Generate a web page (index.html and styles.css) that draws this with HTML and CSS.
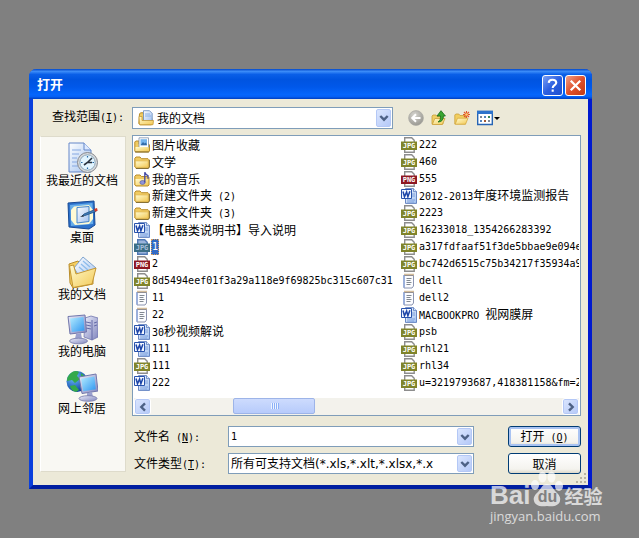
FILE: index.html
```html
<!DOCTYPE html>
<html lang="zh-CN">
<head>
  <meta charset="UTF-8">
  <meta name="viewport" content="width=device-width, initial-scale=1">
  <title>打开</title>
  <link rel="stylesheet" href="styles.css">
</head>
<body>

  <!-- Icon sprites -->
  <svg class="sprites" aria-hidden="true">
    <defs>
      <linearGradient id="gold" x1="0" y1="0" x2="1" y2="1">
        <stop offset="0" stop-color="#fffbd0"/><stop offset="1" stop-color="#f3c955"/>
      </linearGradient>
      <linearGradient id="paper" x1="0" y1="0" x2="1" y2="1">
        <stop offset="0" stop-color="#ffffff"/><stop offset="1" stop-color="#9fc0f0"/>
      </linearGradient>
      <linearGradient id="screen" x1="0" y1="0" x2="1" y2="1">
        <stop offset="0" stop-color="#b5ecff"/><stop offset="1" stop-color="#2f96f0"/>
      </linearGradient>
      <linearGradient id="metal" x1="0" y1="0" x2="1" y2="1">
        <stop offset="0" stop-color="#eceefb"/><stop offset="1" stop-color="#8085bd"/>
      </linearGradient>
      <radialGradient id="globe" cx="35%" cy="30%" r="75%">
        <stop offset="0" stop-color="#6fc4ff"/><stop offset="1" stop-color="#073a9c"/>
      </radialGradient>
      <radialGradient id="grey" cx="40%" cy="30%" r="75%">
        <stop offset="0" stop-color="#d6d5cf"/><stop offset="1" stop-color="#96958f"/>
      </radialGradient>
    </defs>

    <symbol id="folder" viewBox="0 0 16 16">
      <path d="M.8 13V4.2L2 3h4l1.5 1.7H14l1 1V13l-1 1.2H2z" fill="#f0cb62" stroke="#b98d2b"/>
      <path d="M1.5 7h12.7v6.3H1.8z" fill="url(#gold)" stroke="#dcb351" stroke-width=".6"/>
      <path d="M2 14.5h12.5l1-1.5V6" fill="none" stroke="#75622c" stroke-width=".8"/>
    </symbol>

    <symbol id="pictures" viewBox="0 0 16 16">
      <path d="M.8 14V5l1-1H5v3h9.5l1 1v6l-1 1h-13z" fill="#f0cb62" stroke="#b98d2b"/>
      <path d="M5 .8h9.5v10H5z" fill="#fff" stroke="#8292ab" stroke-width=".8"/>
      <path d="M6.5 2.2H13v6H6.5z" fill="#75b4ed"/>
      <path d="M6.5 8.2 9 5l1.5 1.5L12 5.5l1 2.7z" fill="#356ca8"/>
      <path d="M1.5 10h13v4h-13z" fill="url(#gold)"/>
      <path d="M1 15h14" stroke="#75622c" stroke-width=".8"/>
    </symbol>

    <symbol id="music" viewBox="0 0 16 16">
      <path d="M.8 14V5.2L2 4h4l1.5 1.5H14l1 1V14l-1 1H2z" fill="#f0cb62" stroke="#b98d2b"/>
      <path d="M1.5 8h12.7v6H1.8z" fill="url(#gold)"/>
      <ellipse cx="8.5" cy="11.5" rx="2.6" ry="2" fill="#8f94d8" stroke="#5055a0" stroke-width=".6"/>
      <path d="M10.8 11.5V1.2q1 2.6 3.2 3.5v3" fill="none" stroke="#4248a3" stroke-width="1.3"/>
    </symbol>

    <symbol id="word" viewBox="0 0 16 16">
      <path d="M4.5.6h8l3 3v11.8h-11z" fill="url(#paper)" stroke="#5b7cbc" stroke-width=".9"/>
      <path d="M12.5.6v3h3" fill="#dce8fb" stroke="#5b7cbc" stroke-width=".8"/>
      <path d="M11 6h3M11 8h3M6 12h8M6 14h7" stroke="#6c93d5" stroke-width=".8"/>
      <path d="M.5 1.5h10v9H.5z" fill="#f4f8ff" stroke="#2853ac"/>
      <path d="m2 3.5 1.5 5.2L5.6 4l1.3 4.7 2-5.4" fill="none" stroke="#1c45a8" stroke-width="1.5"/>
    </symbol>

    <symbol id="jpg" viewBox="0 0 16 16">
      <path class="tag-page" d="M3.7 5V.8h7l2.5 2.5V5M3.7 12v3.2h9.5V12" stroke-width="1.4"/>
      <path class="tag-label" d="M0 4.5h16V13H0z"/>
      <text x="8" y="11.3" class="tag">JPG</text>
    </symbol>

    <symbol id="png" viewBox="0 0 16 16">
      <path class="tag-page" d="M3.7 5V.8h7l2.5 2.5V5M3.7 12v3.2h9.5V12" stroke-width="1.4"/>
      <path d="M0 4.5h16V13H0z" fill="#8e1722"/>
      <text x="8" y="11.3" class="tag">PNG</text>
    </symbol>

    <symbol id="txt" viewBox="0 0 16 16">
      <path d="M3 2.5h9.5V13L11 15H3z" fill="#fbfcff" stroke="#7e88a8" stroke-width=".9"/>
      <path d="M3 2v12.5" stroke="#8aa6dd" stroke-width="1.4"/>
      <path d="M3.5 1.7h9" stroke="#a77b39" stroke-width="1.8" stroke-dasharray="1 1"/>
      <path d="M5.5 5.5h5M5.5 7.5h4M5.5 9.5h5M5.5 11.5h4" stroke="#737b84" stroke-width=".9"/>
    </symbol>

    <symbol id="mydocs" viewBox="0 0 16 16">
      <path d="M.8 13.5 1.5 4l1-1.2H5l1 1.5h7l1.5 9-1 1.5H2z" fill="#f0cb62" stroke="#b98d2b"/>
      <path d="M5.5.7h6l2.7 2.7v7.8H5.5z" fill="url(#paper)" stroke="#6589bd" stroke-width=".8"/>
      <path d="M7 4h5M7 6h6" stroke="#78a5df" stroke-width=".8"/>
      <path d="M1 6.5h3v4h11.5l-.5 4.2H1.5z" fill="url(#gold)" stroke="#c79b37" stroke-width=".8"/>
    </symbol>

    <symbol id="recent" viewBox="0 0 32 32">
      <path d="M3 1h15l7 7v22H3z" fill="url(#paper)" stroke="#6587c8"/>
      <path d="M18 1v7h7" fill="#dce9ff" stroke="#6587c8"/>
      <path d="M6 8h9M6 12h7M6 16h5M6 20h5M6 24h6" stroke="#86a8e2"/>
      <circle cx="21.5" cy="20.5" r="10" fill="#d8dadd" stroke="#85898f"/>
      <circle cx="21.5" cy="20.5" r="7.7" fill="#e2f5ff" stroke="#8da6b8"/>
      <path d="M21.5 14v1.5M21.5 25.5V27M15 20.5h1.5M26.5 20.5H28" stroke="#2569a7" stroke-width="1.2"/>
      <path d="m18 23 3.5-2.5L26 16M21.5 20.5H26" fill="none" stroke="#29323e" stroke-width="1.6"/>
    </symbol>

    <symbol id="desktop" viewBox="0 0 32 32">
      <path d="m2 4 26-2 1 24-6 4-20-2z" fill="#2d72cb" stroke="#174a95"/>
      <path d="M4 6 26.5 4 27 25 5 27z" fill="#67aeea"/>
      <path d="M8 7.5 23 6l4 5v9l-4 5-14 1-4-5V11z" fill="#fffbd5"/>
      <path d="m11 8.5 12-1v15l-12 1.5z" fill="url(#paper)" stroke="#4585ca"/>
      <path d="m16 17 2-2 11-4.500 1 2-11 4z" fill="#3e7dbd" stroke="#214f81" stroke-width=".8"/>
      <path d="m28 10 3-1 .7 2.700-2.700 1z" fill="#d43b2c"/>
      <path d="m14 18 3-2 1 1.500z" fill="#28323b"/>
    </symbol>

    <symbol id="documents" viewBox="0 0 32 32">
      <path d="m3 8 9-3 3 3 12 2v18l-20 4-3-5z" fill="#f5cf62" stroke="#b98d2b"/>
      <path d="M17 1 30 12 17 26 8 12z" fill="url(#paper)" stroke="#7fa5cf"/>
      <path d="m15 8 7 6M13 11l7 6M17 5l7 6" stroke="#8dbceb" stroke-width="1.3"/>
      <path d="m3.500 10 4-1L10 18l20-6-4 16-19 3.500z" fill="url(#gold)" stroke="#c59734"/>
    </symbol>

    <symbol id="computer" viewBox="0 0 32 32">
      <path d="m19 5 6-2 7 2v19l-6 3-8-3z" fill="url(#metal)" stroke="#7176af" stroke-width=".8"/>
      <path d="M26 7v20M20 9l5 1M20 12l5 1M20 15l5 1M28 10l3-1M28 13l3-1" stroke="#656ba8"/>
      <path d="M2 3.5 19 2l1.5 17L4 21z" fill="url(#metal)" stroke="#7277ac"/>
      <path d="M4 5.5 17.5 4l1 13.5L5.8 19z" fill="url(#screen)"/>
      <path d="m10 21 5-1 1 6H9z" fill="#9aa0ce"/>
      <ellipse cx="12.5" cy="28" rx="9" ry="2.8" fill="url(#metal)" stroke="#7479aa" stroke-width=".8"/>
    </symbol>

    <symbol id="network" viewBox="0 0 32 32">
      <circle cx="11" cy="11.5" r="10.5" fill="url(#globe)"/>
      <path d="M3 5q5-6 10-3l-2 4 3 3-5 4-3-3-5 1q0-4 2-6zM4 16l5-1 4 5-3 2q-5-1-6-6zM15 3l5 4-2 3-3-2z" fill="#34a94b"/>
      <path d="m13 7 17-3 2 17-16 2.5z" fill="url(#metal)" stroke="#7277ac"/>
      <path d="m15.2 8.8 13.2-2.3 1.4 12.7-12.6 2z" fill="url(#screen)"/>
      <path d="m21 23 5-1 1 5h-6z" fill="#9aa0ce"/>
      <ellipse cx="22" cy="28.5" rx="9" ry="2.8" fill="url(#metal)" stroke="#7479aa" stroke-width=".8"/>
    </symbol>

    <symbol id="back" viewBox="0 0 16 16">
      <circle cx="8" cy="8" r="7.4" fill="url(#grey)" stroke="#aaa9a3" stroke-width=".7"/>
      <path d="M12.5 8H4.5M8 4.2 4.2 8 8 11.8" fill="none" stroke="#fff" stroke-width="2"/>
    </symbol>

    <symbol id="up" viewBox="0 0 16 16">
      <path d="M1 14V6l1-1h3l1 1.5h6V14z" fill="#efcf66" stroke="#caa03a" stroke-width=".8"/>
      <path d="m1.3 14.5 2.5-6H14l-2.7 6z" fill="url(#gold)" stroke="#caa03a" stroke-width=".8"/>
      <path d="M7 12q3-1 2.6-6H6L10 .7 14.400 6h-2q0 6-5.400 6z" fill="#3aa631" stroke="#176b18" stroke-width=".8"/>
    </symbol>

    <symbol id="newfolder" viewBox="0 0 16 16">
      <path d="M.8 14V5l1-1h3L6 5.5h5.5V14z" fill="#f2cf60" stroke="#caa03a" stroke-width=".8"/>
      <path d="m1.2 14.2 2.3-6H14l-2.5 6z" fill="url(#gold)" stroke="#d5ab42" stroke-width=".8"/>
      <path d="M12.5 1v7M9 4.5h7M10 2l5 5M15 2l-5 5" stroke="#e0572a" stroke-width="1.1"/>
      <circle cx="12.5" cy="4.5" r="1.3" fill="#ffce70"/>
    </symbol>

    <symbol id="views" viewBox="0 0 16 16">
      <path d="M.7 1.5h14.6v13H.7z" fill="#fff" stroke="#2765b4" stroke-width="1.4"/>
      <path d="M0 .8h16V4H0z" fill="#2d73cc"/>
      <path d="M3 6h2v2H3zM11 10h2v2h-2z" fill="#7d8797"/>
      <path d="M7 6h2v2H7zM3 10h2v2H3z" fill="#5284be"/>
      <path d="M11 6h2v2h-2z" fill="#3b8b55"/>
      <path d="M7 10h2v2H7z" fill="#a15a35"/>
    </symbol>

    <symbol id="chevron" viewBox="0 0 10 10">
      <path d="m1.3 3 3.7 3.7L8.7 3" fill="none" stroke="#4d6185" stroke-width="2.4"/>
    </symbol>
  </svg>

  <form class="dialog">
    <header class="titlebar">
      <h1>打开</h1>
      <button type="button" class="caption help" aria-label="帮助">
        <svg viewBox="0 0 20 20"><path d="M6 7.2Q6.2 4 10 4t4 3.2c0 2.4-3.8 2.6-3.8 5.3M10.2 14.2v2.3" fill="none" stroke="#fff" stroke-width="2.2"/></svg>
      </button>
      <button type="button" class="caption close" aria-label="关闭">
        <svg viewBox="0 0 20 20"><path d="m5 5 10 10M15 5 5 15" stroke="#fff" stroke-width="2.4"/></svg>
      </button>
    </header>

    <div class="client">
      <div class="look-in">
        <label for="lookIn">查找范围<span class="en">(<u>I</u>):</span></label>
        <div class="combo with-icon">
          <svg class="icon combo-icon"><use href="#mydocs"/></svg>
          <select id="lookIn"><option>我的文档</option></select>
          <span class="arrow"><svg><use href="#chevron"/></svg></span>
        </div>
        <div class="tools">
          <button type="button" aria-label="后退" disabled><svg class="icon"><use href="#back"/></svg></button>
          <button type="button" aria-label="向上一级"><svg class="icon"><use href="#up"/></svg></button>
          <button type="button" aria-label="新建文件夹"><svg class="icon"><use href="#newfolder"/></svg></button>
          <button type="button" aria-label="查看"><svg class="icon"><use href="#views"/></svg><span class="caret"></span></button>
        </div>
      </div>

      <div class="main">
        <nav class="places">
          <a href="#"><svg><use href="#recent"/></svg>我最近的文档</a>
          <a href="#"><svg><use href="#desktop"/></svg>桌面</a>
          <a href="#"><svg><use href="#documents"/></svg>我的文档</a>
          <a href="#"><svg><use href="#computer"/></svg>我的电脑</a>
          <a href="#"><svg><use href="#network"/></svg>网上邻居</a>
        </nav>

        <div class="content">
          <div class="browser">
            <ul class="files">
              <li><svg class="icon"><use href="#pictures"/></svg><span>图片收藏</span></li>
              <li><svg class="icon"><use href="#folder"/></svg><span>文学</span></li>
              <li><svg class="icon"><use href="#music"/></svg><span>我的音乐</span></li>
              <li><svg class="icon"><use href="#folder"/></svg><span>新建文件夹<span class="en"> (2)</span></span></li>
              <li><svg class="icon"><use href="#folder"/></svg><span>新建文件夹<span class="en"> (3)</span></span></li>
              <li><svg class="icon"><use href="#word"/></svg><span>【电器类说明书】导入说明</span></li>
              <li class="selected"><svg class="icon"><use href="#jpg"/></svg><span class="en">1</span></li>
              <li><svg class="icon"><use href="#png"/></svg><span class="en">2</span></li>
              <li><svg class="icon"><use href="#jpg"/></svg><span class="en">8d5494eef01f3a29a118e9f69825bc315c607c31</span></li>
              <li><svg class="icon"><use href="#txt"/></svg><span class="en">11</span></li>
              <li><svg class="icon"><use href="#txt"/></svg><span class="en">22</span></li>
              <li><svg class="icon"><use href="#word"/></svg><span><span class="en">30</span>秒视频解说</span></li>
              <li><svg class="icon"><use href="#word"/></svg><span class="en">111</span></li>
              <li><svg class="icon"><use href="#jpg"/></svg><span class="en">111</span></li>
              <li><svg class="icon"><use href="#word"/></svg><span class="en">222</span></li>
              <li><svg class="icon"><use href="#jpg"/></svg><span class="en">222</span></li>
              <li><svg class="icon"><use href="#jpg"/></svg><span class="en">460</span></li>
              <li><svg class="icon"><use href="#png"/></svg><span class="en">555</span></li>
              <li><svg class="icon"><use href="#word"/></svg><span><span class="en">2012-2013</span>年度环境监测报告</span></li>
              <li><svg class="icon"><use href="#jpg"/></svg><span class="en">2223</span></li>
              <li><svg class="icon"><use href="#jpg"/></svg><span class="en">16233018_1354266283392</span></li>
              <li><svg class="icon"><use href="#jpg"/></svg><span class="en">a317fdfaaf51f3de5bbae9e094e</span></li>
              <li><svg class="icon"><use href="#jpg"/></svg><span class="en">bc742d6515c75b34217f35934a9</span></li>
              <li><svg class="icon"><use href="#txt"/></svg><span class="en">dell</span></li>
              <li><svg class="icon"><use href="#txt"/></svg><span class="en">dell2</span></li>
              <li><svg class="icon"><use href="#word"/></svg><span><span class="en">MACBOOKPRO </span>视网膜屏</span></li>
              <li><svg class="icon"><use href="#jpg"/></svg><span class="en">psb</span></li>
              <li><svg class="icon"><use href="#jpg"/></svg><span class="en">rhl21</span></li>
              <li><svg class="icon"><use href="#jpg"/></svg><span class="en">rhl34</span></li>
              <li><svg class="icon"><use href="#jpg"/></svg><span class="en">u=3219793687,418381158&amp;fm=2</span></li>
            </ul>
            <div class="scrollbar">
              <button type="button" class="left" aria-label="向左滚动"><svg><use href="#chevron"/></svg></button>
              <div class="track"><div class="thumb"><i></i><i></i><i></i><i></i></div></div>
              <button type="button" class="right" aria-label="向右滚动"><svg><use href="#chevron"/></svg></button>
            </div>
          </div>

          <div class="fields">
            <label for="fileName">文件名<span class="en"> (<u>N</u>):</span></label>
            <div class="combo">
              <input type="text" id="fileName" value="1">
              <span class="arrow"><svg><use href="#chevron"/></svg></span>
            </div>
            <button type="submit" class="push default">打开<span class="en"> (<u>O</u>)</span></button>

            <label for="fileType">文件类型<span class="en">(<u>T</u>):</span></label>
            <div class="combo">
              <select id="fileType"><option>所有可支持文档(*.xls,*.xlt,*.xlsx,*.x</option></select>
              <span class="arrow"><svg><use href="#chevron"/></svg></span>
            </div>
            <button type="button" class="push">取消</button>
          </div>
        </div>
      </div>
    </div>

    <svg class="grip" viewBox="0 0 12 12"><path d="M9 1h2v2H9zM5 5h2v2H5zM9 5h2v2H9zM1 9h2v2H1zM5 9h2v2H5zM9 9h2v2H9z" fill="#b8b4a2"/></svg>
  </form>

  <!-- Site watermark -->
  <div class="watermark">
    <div class="brand">
      <span class="bai">Bai</span>
      <span class="paw">
        <svg viewBox="0 0 34 36">
          <ellipse cx="5" cy="14" rx="4" ry="5"/>
          <ellipse cx="12.5" cy="6" rx="4" ry="5.5"/>
          <ellipse cx="21.5" cy="6" rx="4" ry="5.5"/>
          <ellipse cx="29" cy="15" rx="4" ry="5"/>
          <path d="M17 13c5 0 6 5 9 8s5 5 4 9-5 6-13 5c-8 1-12-1-13-5s1-6 4-9 4-8 9-8z"/>
        </svg>
        <b>du</b>
      </span>
      <span class="jingyan">经验</span>
    </div>
    <div class="url">jingyan.baidu.com</div>
  </div>

</body>
</html>
```
FILE: styles.css
```css
* {
  box-sizing: border-box;
}

body {
  margin: 0;
  padding: 69px 47px 49px 29px;
  background: #808080;
  color: #000;
  font-family: "Noto Sans CJK SC", sans-serif;
  font-size: 12px;
  line-height: 16px;
  position: relative;
}

/* Half-width text next to 12px Chinese */
.en {
  font-family: "DejaVu Sans Mono", monospace;
  font-size: 10px;
  white-space: pre;
}

button, input, select {
  font-family: inherit;
  font-size: 12px;
  color: inherit;
  margin: 0;
  padding: 0;
}

.sprites {
  position: absolute;
  width: 0;
  height: 0;
}

.icon {
  width: 16px;
  height: 16px;
  flex: none;
}

.tag {
  font-family: "DejaVu Sans Mono", monospace;
  font-size: 7px;
  font-weight: bold;
  fill: var(--tag-text, #fff);
  text-anchor: middle;
}

.tag-page {
  fill: var(--tag-fill, #fff);
  stroke: var(--tag-edge, #8d8d8d);
}

.tag-label {
  fill: var(--tag-label, #80842a);
}

/* Window */
.dialog {
  position: relative;
  background: #ece9d8;
  border: 4px solid;
  border-top: 0;
  border-color: #0a3fdc #0019cf #001ea0 #0a3fdc;
  border-radius: 8px 8px 0 0;
}

.titlebar {
  display: flex;
  align-items: center;
  gap: 2px;
  height: 30px;
  margin: 0 -4px;
  padding: 3px 6px 0 8px;
  border-radius: 7px 7px 0 0;
  background: linear-gradient(#0046c8 0, #3c8cf8 8%, #0a5fe8 18%, #0054e0 35%, #0058ea 60%, #0566fc 85%, #0560f5 92%, #003fc0 100%);
}

.titlebar h1 {
  flex: 1;
  margin: 0;
  padding-bottom: 3px;
  font-size: 13px;
  line-height: 20px;
  font-weight: bold;
  color: #fff;
}

.caption {
  width: 21px;
  height: 21px;
  border: 1px solid #fff;
  border-radius: 3px;
  background: linear-gradient(135deg, #7aa0f5, #2c5fe0 50%, #1d4fd0);
}

.caption.close {
  background: linear-gradient(135deg, #f0a088, #e0512c 50%, #c33a12);
}

.caption svg {
  display: block;
  width: 19px;
  height: 19px;
}

.client {
  padding: 8px 7px 11px;
}

/* Combo boxes */
.combo {
  position: relative;
  height: 21px;
  border: 1px solid #7f9db9;
  background: #fff;
}

.combo input, .combo select {
  display: block;
  width: 100%;
  height: 100%;
  padding: 0 17px 0 2px;
  border: 0;
  background: transparent;
  outline: none;
  appearance: none;
}

.combo.with-icon select {
  padding-left: 24px;
  padding-bottom: 2px;
}

.combo-icon {
  position: absolute;
  left: 5px;
  top: 2px;
}

.arrow {
  position: absolute;
  top: 1px;
  right: 1px;
  bottom: 1px;
  width: 15px;
  display: flex;
  align-items: center;
  justify-content: center;
  border: 1px solid #b4c8f6;
  border-radius: 2px;
  background: linear-gradient(135deg, #dbe6fe, #b5c9f8);
  pointer-events: none;
}

.arrow svg, .scrollbar svg {
  display: block;
  width: 10px;
  height: 10px;
}

/* Look-in row */
.look-in {
  display: flex;
  align-items: center;
}

.look-in label {
  width: 92px;
  padding: 0 0 3px 12px;
}

.look-in .combo {
  flex: 1;
  height: 22px;
}

.tools {
  display: flex;
  gap: 7px;
  width: 188px;
  padding-left: 15px;
}

.tools button {
  display: flex;
  align-items: center;
  gap: 1px;
  border: 0;
  background: none;
}

.caret {
  border: 3px solid transparent;
  border-top-color: #000;
  border-bottom: 0;
}

/* Places bar and content */
.main {
  display: flex;
  gap: 6px;
  margin-top: 6px;
}

.places {
  flex: none;
  width: 86px;
  margin-top: 1px;
  margin-bottom: 2px;
  padding: 5px 2px 0 0;
  border: 1px solid #dedbcb;
  border-left-color: #fff;
  background: #f9f8f3;
}

.places a {
  display: flex;
  flex-direction: column;
  align-items: center;
  height: 57px;
  color: #000;
  text-decoration: none;
}

.places svg {
  width: 32px;
  height: 32px;
  flex: none;
  margin-bottom: -2px;
}

.content {
  flex: 1;
  min-width: 0;
}

.browser {
  border: 1px solid #7f9db9;
  background: #fff;
  padding: 0 1px;
}

.files {
  display: grid;
  grid-auto-flow: column;
  grid-template-rows: repeat(15, 17px);
  grid-template-columns: 60% 40%;
  margin: 0;
  padding: 0 0 7px;
  list-style: none;
  overflow: hidden;
}

.files li {
  display: flex;
  align-items: center;
  gap: 2px;
  min-width: 0;
  white-space: nowrap;
}

.selected {
  --tag-label: #3b6e86;
  --tag-fill: #9ab4dc;
  --tag-edge: #5078b4;
  --tag-text: #a9bfdf;
}

.selected > span {
  height: 16px;
  padding: 0 1px;
  margin-left: -1px;
  background: #316ac5;
  color: #fff;
  outline: 1px dotted #d8a060;
  outline-offset: -1px;
}

/* Horizontal scroll bar */
.scrollbar {
  display: flex;
  height: 17px;
  background: #f3f2ec;
}

.scrollbar button {
  display: flex;
  align-items: center;
  justify-content: center;
  width: 17px;
  border: 1px solid #fff;
  border-radius: 3px;
  background: linear-gradient(135deg, #dbe6fe, #b5c9f8);
  box-shadow: inset 0 0 0 1px #b4c8f6;
}

.left svg {
  transform: rotate(90deg);
}

.right svg {
  transform: rotate(-90deg);
}

.track {
  flex: 1;
}

.thumb {
  display: flex;
  align-items: center;
  justify-content: center;
  gap: 1px;
  width: 20%;
  height: 16px;
  margin-left: 20%;
  border: 1px solid #9db4e8;
  border-radius: 2px;
  background: linear-gradient(#cddbfd, #b7cbfb);
}

.thumb i {
  width: 1px;
  height: 6px;
  background: #eef4fe;
  box-shadow: 1px 0 #8cb0f8;
}

/* File name and type */
.fields {
  display: grid;
  grid-template-columns: 94px 1fr 73px;
  align-items: center;
  row-gap: 6px;
  margin-top: 10px;
  padding-left: 2px;
}

.fields .combo {
  margin-right: 34px;
}

#fileName {
  font-family: "DejaVu Sans Mono", monospace;
  font-size: 10px;
}

#fileType {
  font-family: "DejaVu Sans", "Noto Sans CJK SC", sans-serif;
}

.push {
  height: 21px;
  border: 1px solid #003c74;
  border-radius: 3px;
  background: linear-gradient(#fff, #f4f3ee 80%, #dcd8ca);
  line-height: 16px;
}

.push.default {
  box-shadow: inset 0 0 0 2px #a9c3f2;
}

.grip {
  position: absolute;
  right: 1px;
  bottom: 1px;
  width: 12px;
  height: 12px;
}

/* Watermark */
.watermark {
  position: absolute;
  right: 34px;
  bottom: 13px;
  width: 115px;
  color: #fff;
  fill: #fff;
  opacity: 0.7;
  pointer-events: none;
}

.brand {
  display: flex;
  align-items: flex-end;
  height: 36px;
}

.bai {
  font-family: "Liberation Sans", sans-serif;
  font-size: 26px;
  font-weight: bold;
  line-height: 24px;
}

.paw {
  position: relative;
  width: 34px;
  height: 36px;
}

.paw svg {
  display: block;
}

.paw b {
  position: absolute;
  left: 0;
  right: 0;
  bottom: 2px;
  color: #808080;
  font-family: "Liberation Sans", sans-serif;
  font-size: 16px;
  text-align: center;
}

.jingyan {
  font-size: 19px;
  font-weight: bold;
  line-height: 22px;
}

.url {
  font-family: "Open Sans", sans-serif;
  font-size: 13px;
  line-height: 18px;
}
```
